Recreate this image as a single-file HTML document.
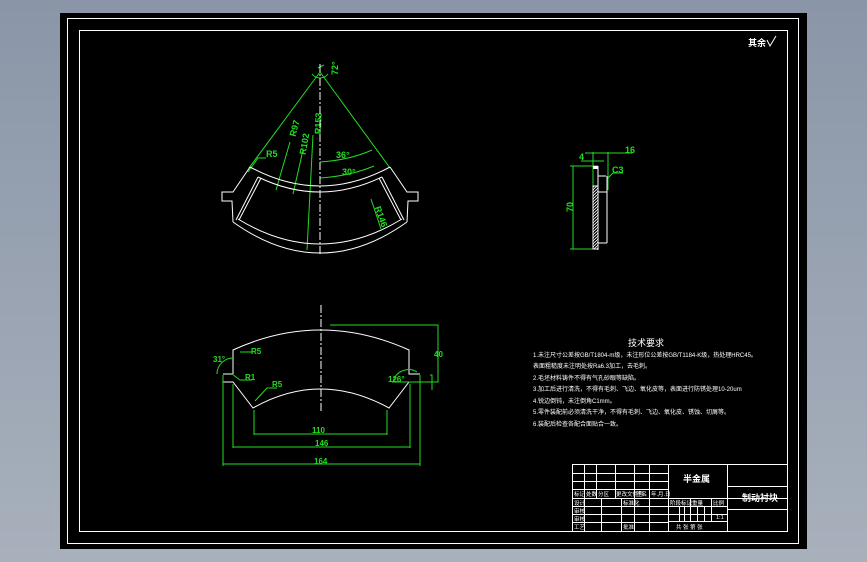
<!DOCTYPE html>
<html><head><meta charset="utf-8"><style>
html,body{margin:0;padding:0;width:867px;height:562px;overflow:hidden;background:#8c98a8}
svg{display:block}
text{font-family:"Liberation Sans","Noto Sans CJK SC",sans-serif}
</style></head><body>
<svg width="867" height="562" viewBox="0 0 867 562" xmlns="http://www.w3.org/2000/svg">
<defs><linearGradient id="bg" x1="0" y1="0" x2="0" y2="1"><stop offset="0" stop-color="#8a96a8"/><stop offset="1" stop-color="#a8b0bc"/></linearGradient>
<pattern id="hat" width="3" height="3" patternUnits="userSpaceOnUse"><path d="M0 3L3 0" stroke="#fff" stroke-width="0.8"/></pattern></defs>
<rect width="867" height="562" fill="url(#bg)"/>
<rect x="60" y="13" width="747" height="536" fill="#000"/>
<g fill="none" stroke="#fff" stroke-width="1" shape-rendering="crispEdges">
<rect x="67.5" y="18.5" width="731" height="525"/>
<rect x="79.5" y="30.5" width="708" height="501"/>
</g>
<text x="748" y="46" fill="#fff" font-size="9" font-weight="bold">其余</text>
<path d="M767 40l3 6 6-10" stroke="#fff" fill="none"/>

<!-- Top view -->
<g fill="none" stroke="#22dd22" stroke-width="1">
<path d="M320 72L249 168M320 72L390 168"/>
<path d="M312 74a10 10 0 0 0 16 0M318 68l6 -3"/>
<path d="M320 162Q350 160 372 150M320 178Q350 176 374 166"/>
<path d="M248 172l10-14h8M276 190l14-48M293 194l10-44M307 250l6-115M381 229l-10-30"/>
</g>
<g fill="#22dd22" font-size="9" font-weight="bold">
<text x="331" y="76" transform="rotate(-90 334 72)">72°</text>
<text x="266" y="157">R5</text>
<text x="290" y="138" transform="rotate(-75 292 134)">R97</text>
<text x="298" y="158" transform="rotate(-80 300 152)">R102</text>
<text x="313" y="138" transform="rotate(-88 315 132)">R153</text>
<text x="336" y="158">36°</text>
<text x="342" y="175">30°</text>
<text x="370" y="210" transform="rotate(70 374 212)">R146</text>
</g>
<g fill="none" stroke="#fff" stroke-width="1">
<path d="M250 167Q320 205 390 167"/>
<path d="M258 177Q320 207 382 177"/>
<path d="M250 167L233 192H222V201H232L233 222"/>
<path d="M390 167L407 192H418V201H408L407 222"/>
<path d="M233 222Q320 284 407 222"/>
<path d="M238 219Q320 269 402 219"/>
<path d="M258 177L236 220M261 178L239 220M382 177L404 220M379 178L401 220"/>
</g>
<path d="M320 64V256" stroke="#fff" stroke-dasharray="8 2 2 2"/>

<!-- Front view -->
<g fill="none" stroke="#fff" stroke-width="1">
<path d="M233 374V350Q320 310 409 350V374H420"/>
<path d="M223 374H233M223 382H233L253 408Q320 370 389 408L409 382H420"/>
</g>
<path d="M321 305V413" stroke="#fff" stroke-dasharray="8 2 2 2"/>
<g fill="none" stroke="#22dd22" stroke-width="1">
<path d="M254 410V435M387 410V435M254 434H387"/>
<path d="M233 384V448M410 384V448M233 447H410"/>
<path d="M223 375V466M420 375V466M223 464H420"/>
<path d="M330 325H438V382H392M438 325V382M430 375H432V390"/>
<path d="M217 374a16 16 0 0 1 16 -16M240 352h12M232 374l8 6h12M255 401l12-13h10"/>
<path d="M393 382a16 16 0 0 1 24 -10"/>
</g>
<g fill="#22dd22" font-size="8" font-weight="bold">
<text x="251" y="354">R5</text>
<text x="245" y="380">R1</text>
<text x="272" y="387">R5</text>
<text x="213" y="362">31°</text>
<text x="388" y="382">126°</text>
<text x="434" y="357">40</text>
<text x="312" y="433">110</text>
<text x="315" y="446">146</text>
<text x="314" y="464">164</text>
</g>

<!-- Side view -->
<g fill="none" stroke="#22dd22">
<path d="M585 153H632M581 161H604M573 166V249M570 166H598M570 249H598M593 152V186M608 152V190M608 178l5-5h10"/>
</g>
<g fill="#22dd22" font-size="9" font-weight="bold">
<text x="625" y="153">16</text><text x="579" y="160">4</text>
<text x="612" y="173">C3</text><text x="565" y="212" transform="rotate(-90 569 208)">70</text>
</g>
<rect x="593" y="186" width="5" height="63" fill="url(#hat)" stroke="#fff"/>
<g fill="none" stroke="#fff"><path d="M598 166V250M598 176H606M598 192H607M598 243H607M607 176V243"/></g>
<rect x="593" y="166" width="5" height="3" fill="#fff"/>

<!-- Tech requirements -->
<text x="628" y="346" fill="#fff" font-size="9">技术要求</text>
<g fill="#fff" font-size="6">
<text x="533" y="357">1.未注尺寸公差按GB/T1804-m级，未注形位公差按GB/T1184-K级，热处理HRC45。</text>
<text x="533" y="368">表面粗糙度未注明处按Ra6.3加工，去毛刺。</text>
<text x="533" y="380">2.毛坯材料铸件不得有气孔砂眼等缺陷。</text>
<text x="533" y="391">3.加工后进行清洗，不得有毛刺、飞边、氧化皮等，表面进行防锈处理10-20um</text>
<text x="533" y="403">4.锐边倒钝，未注倒角C1mm。</text>
<text x="533" y="414">5.零件装配前必须清洗干净，不得有毛刺、飞边、氧化皮、锈蚀、切屑等。</text>
<text x="533" y="426">6.装配后检查各配合面贴合一致。</text>
</g>

<!-- Title block -->
<g fill="none" stroke="#fff" stroke-width="1" shape-rendering="crispEdges">
<rect x="572.5" y="464.5" width="215" height="67"/>
<path d="M572 473.5H668M572 481.5H668M572 489.5H668M572 498.5H787M572 506.5H668M572 514.5H668M572 522.5H668"/>
<path d="M584.5 464V531M596.5 464V498M615.5 464V498M634.5 464V531M649.5 464V531M668.5 464V531M601.5 498V531M621.5 498V531"/>
<path d="M727.5 464V531M727 486.5H787M727 509.5H787"/>
<path d="M668 506.5H727M668 514.5H727M668 521.5H727M690.5 498V521M697.5 506V521M704.5 506V521M711.5 498V521M679.5 506V521M684.5 506V521"/>
</g>
<g fill="#fff" font-size="5.5">
<text x="574" y="496">标记</text><text x="586" y="496">处数</text><text x="598" y="496">分区</text><text x="616" y="496">更改文件号</text><text x="636" y="496">签名</text><text x="651" y="496">年.月.日</text>
<text x="574" y="505">设计</text><text x="623" y="505">标准化</text>
<text x="574" y="513">审核</text><text x="574" y="521">审核</text><text x="574" y="529">工艺</text><text x="623" y="529">批准</text>
<text x="670" y="505">阶段标记</text><text x="692" y="505">重量</text><text x="713" y="505">比例</text>
<text x="716" y="519">1:1</text>
<text x="676" y="529">共  张  第  张</text>
</g>
<text x="683" y="482" fill="#fff" font-size="9" font-weight="bold">半金属</text>
<text x="742" y="501" fill="#fff" font-size="9" font-weight="bold">制动衬块</text>
</svg>
</body></html>
